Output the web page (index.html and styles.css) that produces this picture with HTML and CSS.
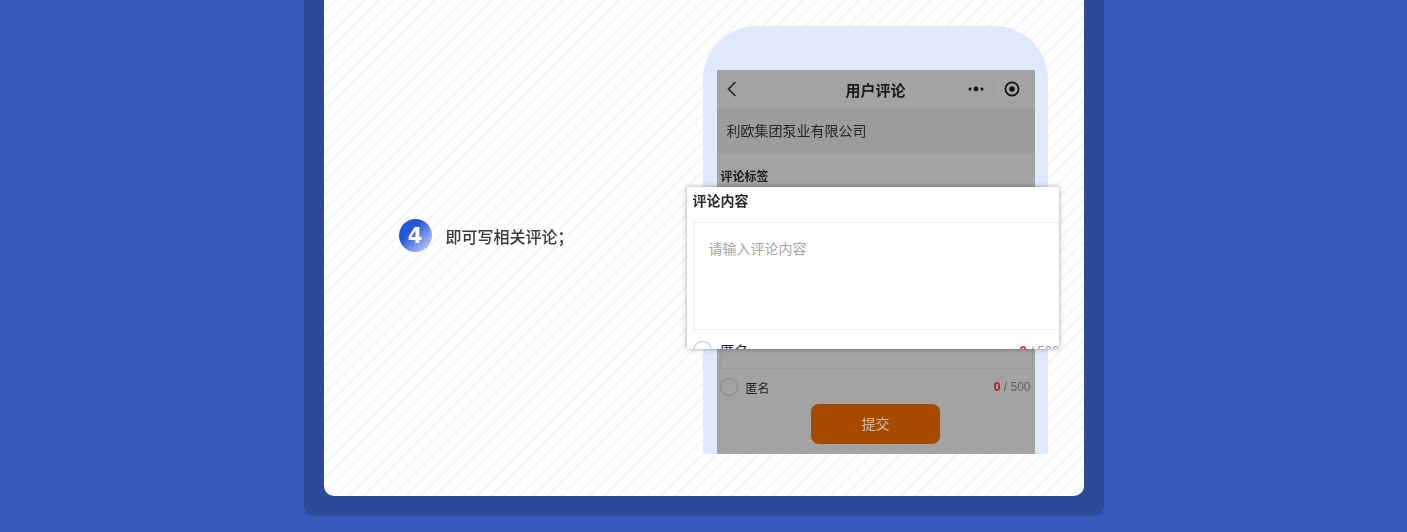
FILE: index.html
```html
<!DOCTYPE html>
<html lang="zh-CN">
<head>
    <meta charset="UTF-8">
    <meta name="viewport" content="width=device-width, initial-scale=1.0">
    <title>用户评论</title>
    <link rel="stylesheet" href="styles.css">
</head>
<body>
    <div class="frame">
        <div class="card">
            <div class="step">
                <span class="step-badge">4</span>
                <span class="step-text">即可写相关评论；</span>
            </div>

            <div class="phone">
                <div class="screen">
                    <div class="nav">
                        <svg class="nav-back" viewBox="0 0 12 18" width="12" height="18">
                            <path d="M9.5 2 2.5 9l7 7" fill="none" stroke="#222" stroke-width="1.6"/>
                        </svg>
                        <span class="nav-title">用户评论</span>
                        <div class="capsule">
                            <svg viewBox="0 0 20 8" width="20" height="8">
                                <circle cx="4" cy="4" r="1.5" fill="#111"/>
                                <circle cx="10" cy="4" r="2.4" fill="#111"/>
                                <circle cx="16" cy="4" r="1.5" fill="#111"/>
                            </svg>
                            <span class="capsule-line"></span>
                            <svg viewBox="0 0 18 18" width="18" height="18">
                                <circle cx="9" cy="9" r="6.6" fill="none" stroke="#111" stroke-width="1.7"/>
                                <circle cx="9" cy="9" r="2.7" fill="#111"/>
                            </svg>
                        </div>
                    </div>
                    <div class="company">利欧集团泵业有限公司</div>
                    <div class="tag-label">评论标签</div>
                    <div class="under-box"></div>
                    <div class="anon-row">
                        <span class="radio"></span>
                        <span class="anon-text">匿名</span>
                        <span class="count"><b>0</b> / 500</span>
                    </div>
                    <div class="submit">提交</div>
                </div>

                <div class="popup">
                    <div class="popup-title">评论内容</div>
                    <div class="popup-box">请输入评论内容</div>
                    <div class="popup-row">
                        <span class="popup-radio"></span>
                        <span class="popup-anon">匿名</span>
                        <span class="popup-count"><b>0</b> / 500</span>
                    </div>
                </div>
            </div>
        </div>
    </div>
</body>
</html>
```

FILE: styles.css
```css
html, body {
    margin: 0;
    padding: 0;
    height: 532px;
    overflow: hidden;
}

body {
    background: #345bbb;
    font-family: "Liberation Sans", "Noto Sans CJK SC", sans-serif;
    color: #333;
}

.frame {
    box-sizing: border-box;
    width: 800px;
    height: 516px;
    margin: 0 auto;
    padding: 0 20px 20px;
    background: #2b4a98;
    border-radius: 0 0 10px 10px;
}

.card {
    display: flex;
    align-items: flex-start;
    height: 496px;
    box-sizing: border-box;
    padding: 26px 36px 0 75px;
    border-radius: 0 0 10px 10px;
    background-color: #fff;
    background-image: repeating-linear-gradient(135deg, #fff 0, #fff 7.5px, #f6f6f6 8px, #f6f6f6 9.5px, #fff 10px);
}

.step {
    display: flex;
    align-items: center;
    gap: 14px;
    margin-top: 193px;
    width: 304px;
    filter: blur(0.35px);
}

.step-badge {
    display: flex;
    align-items: center;
    justify-content: center;
    width: 33px;
    height: 33px;
    border-radius: 50%;
    background: linear-gradient(135deg, #2456d8 35%, #d5e0f6 100%);
    font-family: "DejaVu Sans", sans-serif;
    font-size: 21px;
    font-weight: 700;
    color: #fff;
}

.step-text {
    font-size: 16px;
    font-weight: 500;
    color: #3a3a3a;
    white-space: nowrap;
}

.phone {
    position: relative;
    width: 345px;
    height: 428px;
    box-sizing: border-box;
    padding: 44px 13px 0 14px;
    background: #e0e8fc;
    border-radius: 54px 54px 0 0;
}

.screen {
    height: 384px;
    background: #a3a3a3;
    overflow: hidden;
    filter: blur(0.35px);
}

.nav {
    display: flex;
    align-items: center;
    justify-content: center;
    position: relative;
    height: 38px;
}

.nav-back {
    position: absolute;
    left: 9px;
    top: 10px;
}

.nav-title {
    font-size: 15px;
    font-weight: 700;
    color: #1a1a1a;
}

.capsule {
    position: absolute;
    right: 5px;
    top: 5px;
    display: flex;
    align-items: center;
    box-sizing: border-box;
    width: 75px;
    height: 28px;
    padding-left: 10px;
    border: 1px solid #9f9f9f;
    border-radius: 14px;
}

.capsule-line {
    width: 1px;
    height: 16px;
    margin: 0 9px 0 7px;
    background: #9a9a9a;
}

.company {
    height: 43px;
    padding: 2px 0 0 10px;
    line-height: 43px;
    font-size: 14px;
    background: #9c9c9c;
    color: #262626;
}

.tag-label {
    margin: 16px 0 0 4px;
    font-size: 12px;
    line-height: 16px;
    font-weight: 700;
    color: #1c1c1c;
}

.under-box {
    height: 30px;
    margin: 152px 2px 0 3px;
    border: 1px solid #9b9b9b;
}

.anon-row {
    display: flex;
    align-items: center;
    height: 20px;
    margin-top: 8px;
    padding: 0 4px 0 3px;
}

.radio {
    width: 16px;
    height: 16px;
    border: 1px solid #858585;
    border-radius: 50%;
}

.anon-text {
    margin-left: 8px;
    font-size: 12px;
    color: #1c1c1c;
}

.count {
    margin-left: auto;
    font-size: 12px;
    white-space: nowrap;
    color: #5c5c5c;
}

.count b {
    color: #b3151d;
}

.submit {
    width: 129px;
    height: 40px;
    margin: 7px auto 0;
    line-height: 40px;
    text-align: center;
    font-size: 14px;
    color: #c9c0b4;
    background: #a84a00;
    border-radius: 8px;
}

/* popup over the phone, zoomed part of the form */
.popup {
    position: absolute;
    left: -16px;
    top: 161px;
    width: 372px;
    height: 162px;
    box-sizing: border-box;
    padding-left: 6px;
    background: #fff;
    box-shadow: 0 0 5px rgba(0, 0, 0, 0.35);
    overflow: hidden;
}

.popup-title {
    height: 35px;
    line-height: 29px;
    font-size: 14px;
    font-weight: 700;
    color: #2a2a2a;
    filter: blur(0.3px);
}

.popup-box {
    box-sizing: border-box;
    width: 372px;
    height: 108px;
    padding: 16px 15px;
    border: 1px solid #f0f0f0;
    font-size: 14px;
    line-height: 20px;
    color: #a6a6a6;
}

.popup-row {
    display: flex;
    align-items: flex-start;
    width: 372px;
    height: 20px;
    margin-top: 11px;
    color: #222;
}

.popup-radio {
    box-sizing: border-box;
    flex: none;
    width: 19px;
    height: 19px;
    border: 1px solid #bbb;
    border-radius: 50%;
}

.popup-anon {
    margin-left: 9px;
    font-size: 14px;
    line-height: 20px;
    width: 299px;
    flex: none;
}

.popup-count {
    flex: none;
    font-size: 13px;
    line-height: 20px;
    white-space: nowrap;
    color: #999;
}

.popup-count b {
    color: #e01b24;
}
```
